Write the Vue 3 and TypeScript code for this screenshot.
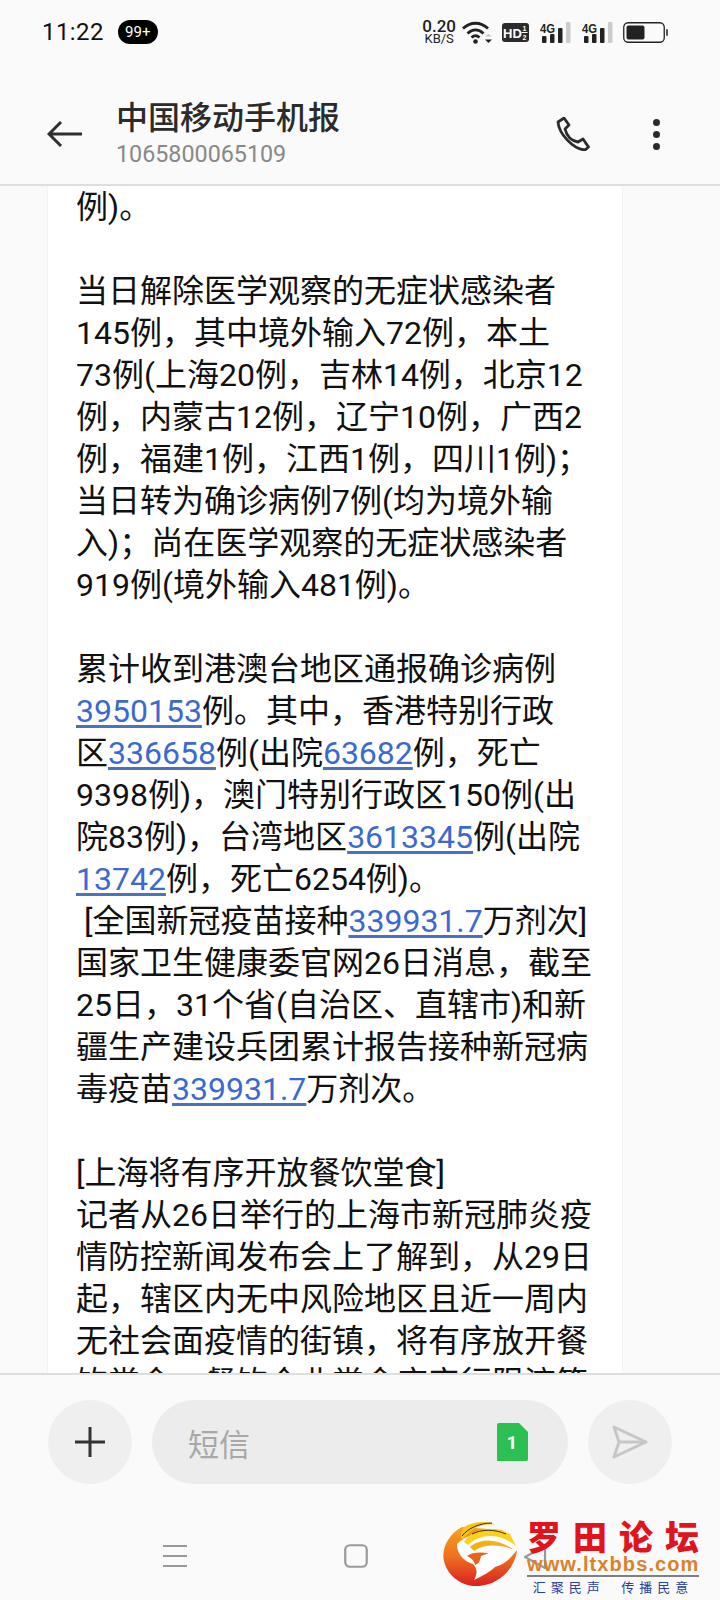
<script setup lang="ts">
const message = [
  '例)。',
  '',
  '当日解除医学观察的无症状感染者',
  '145例，其中境外输入72例，本土',
  '73例(上海20例，吉林14例，北京12',
  '例，内蒙古12例，辽宁10例，广西2',
  '例，福建1例，江西1例，四川1例)；',
  '当日转为确诊病例7例(均为境外输',
  '入)；尚在医学观察的无症状感染者',
  '919例(境外输入481例)。',
  '',
  '累计收到港澳台地区通报确诊病例',
  '{3950153}例。其中，香港特别行政',
  '区{336658}例(出院{63682}例，死亡',
  '9398例)，澳门特别行政区150例(出',
  '院83例)，台湾地区{3613345}例(出院',
  '{13742}例，死亡6254例)。',
  ' [全国新冠疫苗接种{339931.7}万剂次]',
  '国家卫生健康委官网26日消息，截至',
  '25日，31个省(自治区、直辖市)和新',
  '疆生产建设兵团累计报告接种新冠病',
  '毒疫苗{339931.7}万剂次。',
  '',
  '[上海将有序开放餐饮堂食]',
  '记者从26日举行的上海市新冠肺炎疫',
  '情防控新闻发布会上了解到，从29日',
  '起，辖区内无中风险地区且近一周内',
  '无社会面疫情的街镇，将有序放开餐',
  '饮堂食，餐饮企业堂食应实行限流等',
]

// {...} in a line marks a number the SMS app turned into a link
const lines = message.map((line) =>
  line
    .split(/(\{[^}]+\})/)
    .filter(Boolean)
    .map((part) => ({
      text: part.replace(/[{}]/g, ''),
      link: part.startsWith('{'),
    })),
)
</script>

<template>
  <div class="screen">
    <div class="status-bar">
      <span class="time">11:22</span>
      <span class="badge">99+</span>
      <div class="status-icons">
        <div class="speed"><span>0.20</span><span class="unit">KB/S</span></div>
        <svg class="ic-wifi" width="30" height="23" viewBox="0 0 30 23">
          <path d="M1 7.500C8.500 .5 18.500 .5 26 7.500M5.500 12.500C10.500 7.800 16.500 7.800 21.500 12.500M9.500 16.500c3-2.600 5-2.600 8 0" fill="none" stroke="#222" stroke-width="2.800" />
          <circle cx="13.500" cy="20.500" r="2.300" fill="#222" />
          <path d="M23 15.500l3.500-2.500 3.500 2.500z" fill="#c4c4c4" />
          <path d="M23 18.500h7l-3.500 3.500z" fill="#222" />
        </svg>
        <svg class="ic-hd" width="27" height="19" viewBox="0 0 27 19">
          <rect width="27" height="19" rx="3" fill="#2b2b2b" />
          <text x="1" y="14.500" class="hd-text">HD</text>
          <text x="20.500" y="7.500" class="hd-small">1</text>
          <path d="M19.500 9.500h6" stroke="#fff" stroke-width="1" />
          <text x="20.500" y="16.500" class="hd-small">2</text>
        </svg>
        <svg v-for="n in 2" :key="n" class="ic-signal" width="31" height="21" viewBox="0 0 31 21">
          <text x="0" y="10.500" class="sig-text" textLength="15" lengthAdjust="spacingAndGlyphs">4G</text>
          <rect x="2" y="14" width="4.500" height="7" rx="1" fill="#222" />
          <rect x="10" y="12" width="4.500" height="9" rx="1" fill="#222" />
          <rect x="18" y="6" width="4.500" height="15" rx="1" fill="#222" />
          <rect x="26" y="0" width="4.500" height="21" rx="1" fill="#ccc" />
        </svg>
        <svg class="ic-battery" width="45" height="21" viewBox="0 0 45 21">
          <rect x=".75" y=".75" width="40.500" height="19.500" rx="4.500" fill="none" stroke="#222" stroke-width="1.300" />
          <rect x="3.500" y="3.500" width="18" height="14" rx="2" fill="#222" />
          <rect x="43" y="7" width="2" height="7" rx="1" fill="#555" />
        </svg>
      </div>
    </div>

    <header class="app-bar">
      <svg class="back" width="36" height="28" viewBox="0 0 36 28">
        <path d="M35 14H3M14 2 2 14l12 12" fill="none" stroke="#2e2e2e" stroke-width="3" />
      </svg>
      <div class="title-box">
        <div class="title">中国移动手机报</div>
        <div class="number">1065800065109</div>
      </div>
      <svg class="phone" width="34" height="34" viewBox="0 0 34 34">
        <path d="M2 5C3 17 17 32 29 33l3.500-3L27 22l-5 3C16 24 11 20 9 12l4-4L8 1z" fill="none" stroke="#2b2b2b" stroke-width="2.800" stroke-linejoin="round" />
      </svg>
      <div class="dots"><i></i><i></i><i></i></div>
    </header>

    <main class="thread">
      <div class="bubble">
        <div v-for="(line, i) in lines" :key="i" class="line">
          <template v-for="(seg, j) in line" :key="j">
            <a v-if="seg.link" class="link">{{ seg.text }}</a>
            <span v-else>{{ seg.text }}</span>
          </template>
        </div>
      </div>
    </main>

    <footer class="composer">
      <div class="round-btn">
        <svg width="32" height="32" viewBox="0 0 32 32">
          <path d="M1 16h30M16 1v30" stroke="#333" stroke-width="3" />
        </svg>
      </div>
      <div class="input">
        <span class="placeholder">短信</span>
        <svg class="sim" width="31" height="38" viewBox="0 0 31 38">
          <path d="M0 2a2 2 0 0 1 2-2h20l9 9v27a2 2 0 0 1-2 2H0z" fill="#2cc052" />
          <text x="15" y="26" text-anchor="middle" class="sim-text">1</text>
        </svg>
      </div>
      <div class="round-btn">
        <svg width="38" height="36" viewBox="0 0 38 36">
          <path d="M3 3 35 18 3 33l5-15z" fill="none" stroke="#c6c6c6" stroke-width="3" stroke-linejoin="round" />
          <path d="M8 18h27" stroke="#c6c6c6" stroke-width="3" />
        </svg>
      </div>
    </footer>

    <nav class="nav-bar">
      <svg width="26" height="24" viewBox="0 0 26 24">
        <path d="M1 2h24M1 12h24M1 22h24" stroke="#999" stroke-width="2" />
      </svg>
      <svg width="24" height="24" viewBox="0 0 24 24">
        <rect x="1.250" y="1.250" width="21.500" height="21.500" rx="4.500" fill="none" stroke="#999" stroke-width="2.200" />
      </svg>
      <svg width="24" height="26" viewBox="0 0 24 26">
        <path d="M22 2 2 13l20 11z" fill="none" stroke="#999" stroke-width="2.200" stroke-linejoin="round" />
      </svg>
    </nav>

    <div class="watermark">
      <svg class="phoenix" width="76" height="68" viewBox="0 0 76 68">
        <defs>
          <linearGradient id="bodyGrad" x1="0" y1="0" x2="0" y2="1">
            <stop offset="0" stop-color="#f6a21e" />
            <stop offset="0.500" stop-color="#ef701f" />
            <stop offset="1" stop-color="#d9201f" />
          </linearGradient>
        </defs>
        <path d="M20 7C6 14-1 30 2 41c4 17 20 26 35 25 19-1 35-16 38-35L60 10z" fill="url(#bodyGrad)" />
        <path d="M15 24c0 12 9 18 16 20 4 4 5 9 1 16 10-5 17-9 21-13 10-3 16-9 22-17l-5-13C50 10 26 12 15 24z" fill="#fff" />
        <path d="M25 36c5-4 12-4 22-3l-8 3c-1 6-3 8-6 9-1-5-4-7-8-9z" fill="#e8641c" />
        <path d="M22 7c8-5 24-7 31-2C40 3 28 8 20 21c-2-5-1-11 2-14z" fill="#f6c51b" />
        <path d="M22 22C30 8 52 5 68 14l6 12C60 14 40 12 26 25z" fill="#f8d21c" />
        <path d="M28 27c10-9 28-9 44 3-14-6-30-6-40 1z" fill="#f3b118" />
        <path d="M20 16C26 8 38 3 50 3M30 14c10-5 22-5 34 0" fill="none" stroke="#3a2f10" stroke-width="1" />
      </svg>
      <div class="brand">
        <div class="brand-name">罗田论坛</div>
        <div class="brand-url">www.ltxbbs.com</div>
        <div class="brand-slogan">汇聚民声&nbsp;&nbsp;传播民意</div>
      </div>
    </div>
  </div>
</template>

<style>
html,
body {
  margin: 0;
  background: #fafafa;
}
</style>

<style scoped>
.screen {
  position: relative;
  width: 720px;
  height: 1600px;
  overflow: hidden;
  background: #fafafa;
  display: flex;
  flex-direction: column;
  font-family: Roboto, "Noto Sans CJK SC", sans-serif;
  color: #111;
}
.status-bar {
  height: 64px;
  display: flex;
  align-items: center;
  padding: 0 52px 0 42px;
  box-sizing: border-box;
  flex-shrink: 0;
}
.time {
  font-size: 24px;
  letter-spacing: 0.4px;
  color: #111;
}
.badge {
  margin-left: 14px;
  width: 40px;
  height: 24px;
  border-radius: 12px;
  background: #000;
  color: #fff;
  font-size: 15px;
  line-height: 24px;
  text-align: center;
}
.status-icons {
  margin-left: auto;
  display: flex;
  align-items: center;
}
.speed {
  display: flex;
  flex-direction: column;
  align-items: center;
  font-size: 17px;
  font-weight: 500;
  line-height: 13px;
  color: #222;
}
.unit {
  font-size: 13px;
  line-height: 11px;
  font-weight: 400;
}
.ic-wifi { margin-left: 6px; }
.ic-hd { margin-left: 10px; }
.ic-signal { margin-left: 11px; }
.ic-battery { margin-left: 10px; }
.hd-text {
  font: 700 13px "Liberation Sans", sans-serif;
  fill: #fff;
}
.hd-small {
  font: 700 7px "Liberation Sans", sans-serif;
  fill: #fff;
}
.sig-text {
  font: 700 13px "Liberation Sans", sans-serif;
  fill: #222;
}
.sim-text {
  font: 700 18px Roboto, sans-serif;
  fill: #fff;
}
.app-bar {
  height: 122px;
  display: flex;
  align-items: center;
  padding: 34px 60px 14px 47px;
  box-sizing: border-box;
  border-bottom: 2px solid #dedede;
  flex-shrink: 0;
}
.title-box {
  margin-left: 33px;
  flex: 1;
}
.title {
  font-size: 32px;
  font-weight: 500;
  line-height: 40px;
  color: #2b2b2b;
}
.number {
  font-size: 23.300px;
  line-height: 32px;
  color: #888;
}
.phone {
  margin-right: 63px;
}
.dots {
  display: flex;
  flex-direction: column;
  gap: 5px;
}
.dots i {
  display: block;
  width: 7px;
  height: 7px;
  border-radius: 50%;
  background: #2b2b2b;
}
.thread {
  flex: 1;
  min-height: 0;
  overflow: hidden;
  padding: 0 98px 0 48px;
}
.bubble {
  background: #fff;
  box-shadow: 0 0 0 1px #f3f3f3;
  padding: 0 20px 0 28px;
  width: 574px;
  box-sizing: border-box;
}
.line {
  height: 42px;
  line-height: 42px;
  font-size: 32px;
  white-space: pre;
  color: #111;
}
.link {
  color: #3b69cf;
  text-decoration: underline;
  text-decoration-color: #4a72bd;
  text-underline-offset: 3px;
}
.composer {
  height: 142px;
  border-top: 2px solid #dedede;
  display: flex;
  align-items: center;
  gap: 20px;
  padding: 0 48px 6px;
  box-sizing: border-box;
  flex-shrink: 0;
}
.round-btn {
  width: 84px;
  height: 84px;
  border-radius: 50%;
  background: #efefef;
  display: flex;
  align-items: center;
  justify-content: center;
  flex-shrink: 0;
}
.input {
  flex: 1;
  height: 84px;
  border-radius: 42px;
  background: #ececec;
  display: flex;
  align-items: center;
  justify-content: space-between;
  padding: 0 40px 0 36px;
}
.placeholder {
  font-size: 31px;
  color: #a8a8a8;
}
.nav-bar {
  height: 85px;
  display: flex;
  align-items: flex-start;
  justify-content: space-between;
  padding: 29px 173px 0 162px;
  box-sizing: border-box;
  flex-shrink: 0;
}
.watermark {
  position: absolute;
  left: 442px;
  top: 1520px;
  display: flex;
  gap: 9px;
}
.brand {
  width: 172px;
  display: flex;
  flex-direction: column;
  align-items: stretch;
}
.brand-name {
  height: 36px;
  line-height: 36px;
  font-size: 34px;
  font-weight: 900;
  letter-spacing: 12px;
  white-space: nowrap;
  color: #e0141d;
}
.brand-url {
  font: 700 20px/16px "Liberation Sans", sans-serif;
  letter-spacing: 1.100px;
  white-space: nowrap;
  color: #d9822b;
  border-bottom: 2px solid #808080;
  padding-bottom: 3px;
}
.brand-slogan {
  margin-top: 3px;
  font-size: 13px;
  line-height: 15px;
  letter-spacing: 5px;
  white-space: nowrap;
  text-align: center;
  color: #2a3f9c;
}
</style>
